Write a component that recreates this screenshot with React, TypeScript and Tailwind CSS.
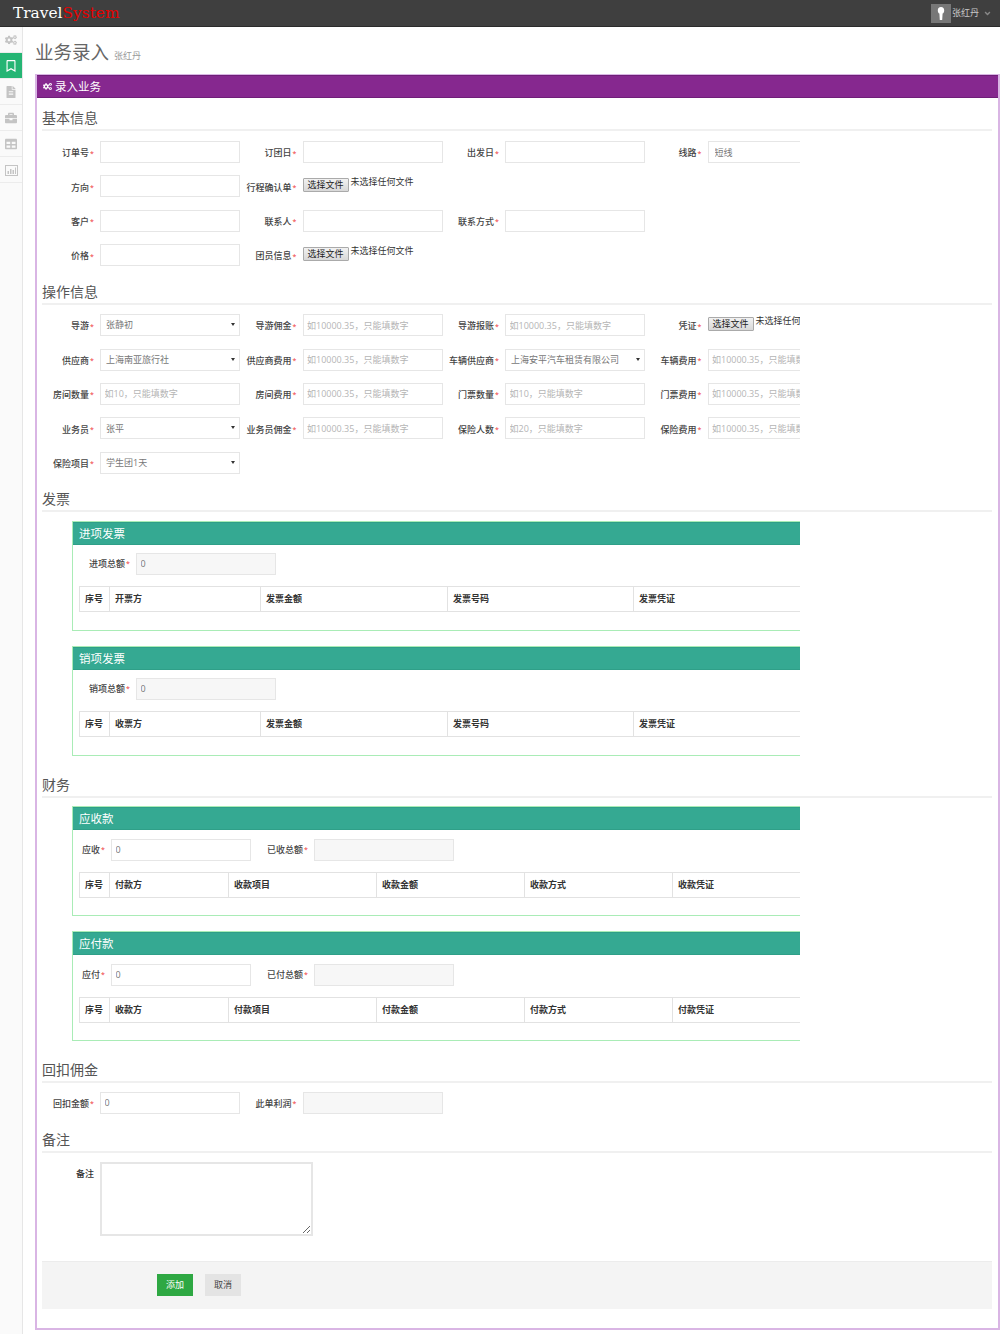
import type { ReactNode } from "react"
import { FaAngleDown, FaCogs, FaFileAlt, FaBriefcase, FaTable, FaRegBookmark } from "react-icons/fa"

const HINT_MONEY = "如10000.35，只能填数字"

function Label({ text, width = 52 }: { text: string; width?: number }) {
    return (
        <label className="flex shrink-0 items-center justify-end pr-[7px] text-[9px] font-medium text-[#444]" style={{ width: width + 6 }}>
            {text}
            <span className="ml-[1px] w-[3px] text-[7px] leading-[9px] text-[#e33]">*</span>
        </label>
    )
}

function TextInput({ placeholder, value, disabled, px = "px-[3.5px]", w = "w-[140px]" }: { placeholder?: string; value?: string; disabled?: boolean; px?: string; w?: string }) {
    return (
        <input
            readOnly
            placeholder={placeholder}
            value={value ?? ""}
            className={`h-[22px] shrink-0 border border-[#e6e6e6] ${w} ${px} text-[9px] text-[#777] outline-none placeholder:text-[#b5b5b5] ${disabled ? "bg-[#f7f7f7]" : "bg-white"}`}
        />
    )
}

function SelectBox({ value }: { value: string }) {
    return (
        <div className="relative h-[22px] w-[140px] shrink-0">
            <select className="block h-full w-full appearance-none border border-[#e6e6e6] bg-white px-[5px] text-[9px] text-[#777] outline-none" defaultValue={value}>
                <option>{value}</option>
            </select>
            <span className="absolute right-[5px] top-[9px] h-0 w-0 border-x-[2px] border-t-[3px] border-x-transparent border-t-[#333]" />
        </div>
    )
}

function FileInput() {
    return (
        <div className="flex h-[22px] shrink-0 items-start whitespace-nowrap">
            <button className="mt-[3px] h-[14px] w-[46px] rounded-[1px] border border-[#aaa] bg-gradient-to-b from-[#f2f2f2] to-[#d8d8d8] text-[9px] leading-[12px] text-[#222]">选择文件</button>
            <span className="ml-[2px] text-[9px] leading-[14px] text-[#333]">未选择任何文件</span>
        </div>
    )
}

function Field({ label, children }: { label: string; children: ReactNode }) {
    return (
        <div className="flex w-[202.5px] shrink-0 items-center">
            <div className="pt-[2px]">
                <Label text={label} />
            </div>
            {children}
        </div>
    )
}

function Row({ children, last }: { children: ReactNode; last?: boolean }) {
    return <div className={`flex h-[22px] ${last ? "" : "mb-[12.4px]"}`}>{children}</div>
}

function SectionTitle({ text, mt }: { text: string; mt: string }) {
    return <h3 className={`h-[23px] border-b-2 border-[#f0f0f0] text-[14px] leading-[20px] text-[#555] ${mt}`}>{text}</h3>
}

function DataTable({ cols, widths }: { cols: string[]; widths: number[] }) {
    return (
        <table className="table-fixed border-collapse" style={{ width: widths.reduce((a, b) => a + b, 0) }}>
            <colgroup>
                {widths.map((w, i) => (
                    <col key={i} style={{ width: w }} />
                ))}
            </colgroup>
            <thead>
                <tr>
                    {cols.map((c) => (
                        <th key={c} className="h-[25px] border border-[#e2e2e2] px-[5px] text-left text-[9px] font-bold text-[#333]">{c}</th>
                    ))}
                </tr>
            </thead>
        </table>
    )
}

function Panel({ title, top, cols, widths, mt, topMt = "mt-[8px]" }: { title: string; top: ReactNode; cols: string[]; widths: number[]; mt: string; topMt?: string }) {
    return (
        <div className={`ml-[30px] h-[110px] w-[800px] border border-[#a9ecb6] ${mt}`}>
            <div className="h-[23px] border-y border-[#2f9f88] bg-[#35a992] px-[6px] text-[11.5px] leading-[21px] text-white">{title}</div>
            <div className={`flex h-[22px] ${topMt}`}>{top}</div>
            <div className="ml-[6px] mt-[11px]">
                <DataTable cols={cols} widths={widths} />
            </div>
        </div>
    )
}

function ChartIcon() {
    return (
        <svg width="13" height="11" viewBox="0 0 13 11" fill="currentColor">
            <path d="M0 0h13v11H0zM1 1v9h11V1z" fillRule="evenodd" />
            <path d="M2.5 6H4v3H2.5zM5 4h1.5v5H5zM7.5 5H9v4H7.5zM10 2.5h1V9h-1z" />
        </svg>
    )
}

const navIcons = [FaCogs, FaRegBookmark, FaFileAlt, FaBriefcase, FaTable, ChartIcon]

const invoiceCols = ["序号", "发票金额", "发票号码", "发票凭证"]
const invoiceWidths = [30, 151, 187, 186, 186]
const financeWidths = [30, 119, 148, 148, 148, 148]

export default function App() {
    return (
        <div className="flex h-[1334px] w-[1000px] flex-col overflow-hidden bg-white font-['Open_Sans','Noto_Sans_CJK_SC',sans-serif]">
            <header className="flex h-[27px] shrink-0 items-center justify-between border-b border-[#2b2b2b] bg-[#3f3f3f] pl-[13px] pr-[8px]">
                <div className="font-['DejaVu_Serif',serif] text-[15.4px] leading-[24px]">
                    <span className="text-white">Travel</span>
                    <span className="text-[#e60000]">System</span>
                </div>
                <div className="flex items-center">
                    <div className="flex h-[19px] w-[20px] items-center justify-center bg-[#777]">
                        <svg width="8" height="13" viewBox="0 0 8 13">
                            <path d="M4 0C1.8 0 .8 1.6.8 3.4c0 1.5.7 2.6 1.6 3.2L2.8 13h2.4l.4-6.4c.9-.6 1.6-1.7 1.6-3.2C7.2 1.6 6.2 0 4 0z" fill="#fff" />
                        </svg>
                    </div>
                    <span className="ml-[1px] text-[9px] text-[#c8c8c8]">张红丹</span>
                    <FaAngleDown className="ml-[4px] text-[9px] text-[#888]" />
                </div>
            </header>

            <div className="flex flex-1">
                <nav className="w-[23px] shrink-0 border-r border-[#e6e6e6] bg-[#fafafa]">
                    {navIcons.map((Icon, i) => (
                        <div key={i} className={`flex h-[26px] items-center justify-center border-b border-[#ececec] pt-[1px] text-[12px] ${i === 1 ? "bg-[#25b574] text-white" : "text-[#c4c4c4]"}`}>
                            <Icon />
                        </div>
                    ))}
                </nav>

                <main className="min-w-0 flex-1 pl-[12px] pt-[12px]">
                    <div className="flex h-[26px] items-baseline">
                        <h1 className="text-[18.5px] leading-[26px] text-[#666]">业务录入</h1>
                        <small className="ml-[5px] text-[9px] text-[#999]">张红丹</small>
                    </div>

                    <section className="mt-[9px] border-x-2 border-b-2 border-t border-[#d9b5e4]">
                        <div className="flex h-[23px] items-center border-y border-[#6f1e78] bg-[#86288f] pl-[6px] text-[11.5px] text-white">
                            <FaCogs className="mr-[3px] text-[9px]" />
                            录入业务
                        </div>

                        <div className="pl-[5px] pr-[6px]">
                            <SectionTitle text="基本信息" mt="mt-[10px]" />
                            <div className="mt-[10px] w-[758px] overflow-hidden">
                                <Row>
                                    <Field label="订单号"><TextInput /></Field>
                                    <Field label="订团日"><TextInput /></Field>
                                    <Field label="出发日"><TextInput /></Field>
                                    <Field label="线路"><TextInput value="短线" px="px-[6px]" /></Field>
                                </Row>
                                <Row>
                                    <Field label="方向"><TextInput /></Field>
                                    <Field label="行程确认单"><FileInput /></Field>
                                </Row>
                                <Row>
                                    <Field label="客户"><TextInput /></Field>
                                    <Field label="联系人"><TextInput /></Field>
                                    <Field label="联系方式"><TextInput /></Field>
                                </Row>
                                <Row last>
                                    <Field label="价格"><TextInput /></Field>
                                    <Field label="团员信息"><FileInput /></Field>
                                </Row>
                            </div>

                            <SectionTitle text="操作信息" mt="mt-[16px]" />
                            <div className="mt-[9px] w-[758px] overflow-hidden">
                                <Row>
                                    <Field label="导游"><SelectBox value="张静初" /></Field>
                                    <Field label="导游佣金"><TextInput placeholder={HINT_MONEY} /></Field>
                                    <Field label="导游报账"><TextInput placeholder={HINT_MONEY} /></Field>
                                    <Field label="凭证"><FileInput /></Field>
                                </Row>
                                <Row>
                                    <Field label="供应商"><SelectBox value="上海南亚旅行社" /></Field>
                                    <Field label="供应商费用"><TextInput placeholder={HINT_MONEY} /></Field>
                                    <Field label="车辆供应商"><SelectBox value="上海安平汽车租赁有限公司" /></Field>
                                    <Field label="车辆费用"><TextInput placeholder={HINT_MONEY} /></Field>
                                </Row>
                                <Row>
                                    <Field label="房间数量"><TextInput placeholder="如10，只能填数字" /></Field>
                                    <Field label="房间费用"><TextInput placeholder={HINT_MONEY} /></Field>
                                    <Field label="门票数量"><TextInput placeholder="如10，只能填数字" /></Field>
                                    <Field label="门票费用"><TextInput placeholder={HINT_MONEY} /></Field>
                                </Row>
                                <Row>
                                    <Field label="业务员"><SelectBox value="张平" /></Field>
                                    <Field label="业务员佣金"><TextInput placeholder={HINT_MONEY} /></Field>
                                    <Field label="保险人数"><TextInput placeholder="如20，只能填数字" /></Field>
                                    <Field label="保险费用"><TextInput placeholder={HINT_MONEY} /></Field>
                                </Row>
                                <Row last>
                                    <Field label="保险项目"><SelectBox value="学生团1天" /></Field>
                                </Row>
                            </div>

                            <SectionTitle text="发票" mt="mt-[15px]" />
                            <div className="w-[758px] overflow-hidden">
                                <Panel
                                    title="进项发票"
                                    mt="mt-[9px]"
                                    top={<><Label text="进项总额" width={57} /><TextInput value="0" disabled /></>}
                                    cols={["序号", "开票方", ...invoiceCols.slice(1)]}
                                    widths={invoiceWidths}
                                />
                                <Panel
                                    title="销项发票"
                                    mt="mt-[15px]"
                                    top={<><Label text="销项总额" width={57} /><TextInput value="0" disabled /></>}
                                    cols={["序号", "收票方", ...invoiceCols.slice(1)]}
                                    widths={invoiceWidths}
                                />
                            </div>

                            <SectionTitle text="财务" mt="mt-[19px]" />
                            <div className="w-[758px] overflow-hidden">
                                <Panel
                                    title="应收款"
                                    mt="mt-[8px]"
                                    topMt="mt-[9px]"
                                    top={
                                        <>
                                            <Label text="应收" width={32} />
                                            <TextInput value="0" />
                                            <Label text="已收总额" width={57} />
                                            <TextInput disabled />
                                        </>
                                    }
                                    cols={["序号", "付款方", "收款项目", "收款金额", "收款方式", "收款凭证"]}
                                    widths={financeWidths}
                                />
                                <Panel
                                    title="应付款"
                                    mt="mt-[15px]"
                                    topMt="mt-[9px]"
                                    top={
                                        <>
                                            <Label text="应付" width={32} />
                                            <TextInput value="0" />
                                            <Label text="已付总额" width={57} />
                                            <TextInput disabled />
                                        </>
                                    }
                                    cols={["序号", "收款方", "付款项目", "付款金额", "付款方式", "付款凭证"]}
                                    widths={financeWidths}
                                />
                            </div>

                            <SectionTitle text="回扣佣金" mt="mt-[19px]" />
                            <div className="mt-[9px] w-[758px] overflow-hidden">
                                <Row last>
                                    <Field label="回扣金额"><TextInput value="0" /></Field>
                                    <Field label="此单利润"><TextInput disabled /></Field>
                                </Row>
                            </div>

                            <SectionTitle text="备注" mt="mt-[16px]" />
                            <div className="mt-[9px] flex">
                                <label className="w-[52px] pt-[5px] text-right text-[9px] font-medium text-[#333]">备注</label>
                                <textarea readOnly className="ml-[6px] h-[74px] w-[213px] border-2 border-[#e6e6e6] bg-white outline-none" />
                            </div>

                            <div className="mb-[19px] mt-[25px] flex h-[48px] items-center border-t border-[#ececec] bg-[#f4f4f4] pl-[115px]">
                                <button className="h-[22px] w-[36px] bg-[#2ea843] text-[9px] text-white">添加</button>
                                <button className="ml-[12px] h-[22px] w-[36px] bg-[#e4e4e4] text-[9px] text-[#444]">取消</button>
                            </div>
                        </div>
                    </section>
                </main>
            </div>
        </div>
    )
}
